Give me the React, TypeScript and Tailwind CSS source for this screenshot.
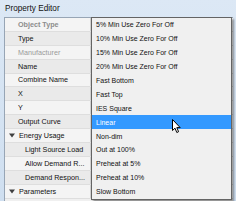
import React from "react";

const rows: { label: string; kind: "head" | "norm" | "gray" | "cat" | "sub"; alt?: boolean }[] = [
  { label: "Object Type", kind: "head" },
  { label: "Type", kind: "norm", alt: true },
  { label: "Manufacturer", kind: "gray" },
  { label: "Name", kind: "norm", alt: true },
  { label: "Combine Name", kind: "norm" },
  { label: "X", kind: "norm", alt: true },
  { label: "Y", kind: "norm" },
  { label: "Output Curve", kind: "norm", alt: true },
  { label: "Energy Usage", kind: "cat" },
  { label: "Light Source Load", kind: "sub", alt: true },
  { label: "Allow Demand R...", kind: "sub" },
  { label: "Demand Respon...", kind: "sub", alt: true },
  { label: "Parameters", kind: "cat" },
];

const items = [
  "5% Min Use Zero For Off",
  "10% Min Use Zero For Off",
  "15% Min Use Zero For Off",
  "20% Min Use Zero For Off",
  "Fast Bottom",
  "Fast Top",
  "IES Square",
  "Linear",
  "Non-dim",
  "Out at 100%",
  "Preheat at 5%",
  "Preheat at 10%",
  "Slow Bottom",
];

function Tri() {
  return (
    <svg width="6" height="5" viewBox="0 0 6 5" className="mr-[4px]">
      <path d="M0 0.5 L6 0.5 L3 4.5 Z" fill="#404040" />
    </svg>
  );
}

export default function App() {
  return (
    <div
      className="relative w-[236px] h-[201px] overflow-hidden bg-gradient-to-b from-[#dce8f5] to-[#cfdff0] text-black"
      style={{ fontFamily: '"Liberation Sans", Arial, sans-serif' }}
    >
      <div className="h-[17px] pl-[5px] text-[8.2px] leading-[17px] text-[#111]">Property Editor</div>
      <div className="ml-[4px] mr-[3px] h-[184px] border-l border-t border-[#97a5b5] bg-[#f0f0f0] flex flex-col">
        {rows.map((r, i) => (
          <div
            key={i}
            className={`flex h-[13.9px] shrink-0 items-center border-b border-[#dedede] ${
              r.alt ? "bg-[#eaeaea]" : "bg-[#f4f4f4]"
            }`}
          >
            <div className="flex h-full w-[85px] items-center text-[7.2px] leading-none text-[#111]">
              {r.kind === "cat" ? (
                <div className="flex items-center pl-[4px]">
                  <Tri />
                  <span>{r.label}</span>
                </div>
              ) : r.kind === "sub" ? (
                <span className="pl-[20px]">{r.label}</span>
              ) : r.kind === "head" ? (
                <span className="pl-[13px] font-bold text-[#8c8c8c]">{r.label}</span>
              ) : r.kind === "gray" ? (
                <span className="pl-[13px] text-[#9a9a9a]">{r.label}</span>
              ) : (
                <span className="pl-[13px]">{r.label}</span>
              )}
            </div>
            <div className="h-full w-[1px] bg-[#d0d0d0]" />
            <div className="h-full w-[1px] bg-[#f3cf9c]" />
            <div className="h-full flex-1 bg-white" />
          </div>
        ))}
      </div>

      {/* dropdown list */}
      <div className="absolute left-[91px] top-[17px] w-[141px] border border-[#646464] bg-[#f0f0f0] shadow-[2px_2px_2px_rgba(0,0,0,0.4)]">
        {items.map((t, i) => (
          <div
            key={t}
            className={`flex h-[13.9px] items-center pl-[4px] text-[7px] leading-none ${
              i === 7 ? "bg-[#3399ff] text-white" : "text-[#111]"
            }`}
          >
            {t}
          </div>
        ))}
      </div>

      {/* mouse cursor */}
      <svg className="absolute left-[172px] top-[119px]" width="10" height="15" viewBox="0 0 10 15">
        <path
          d="M0.5 0.5 L0.5 11.5 L3 9.2 L4.8 13.5 L6.6 12.7 L4.8 8.6 L8.2 8.6 Z"
          fill="white"
          stroke="black"
          strokeWidth="1"
          strokeLinejoin="round"
        />
      </svg>
    </div>
  );
}
